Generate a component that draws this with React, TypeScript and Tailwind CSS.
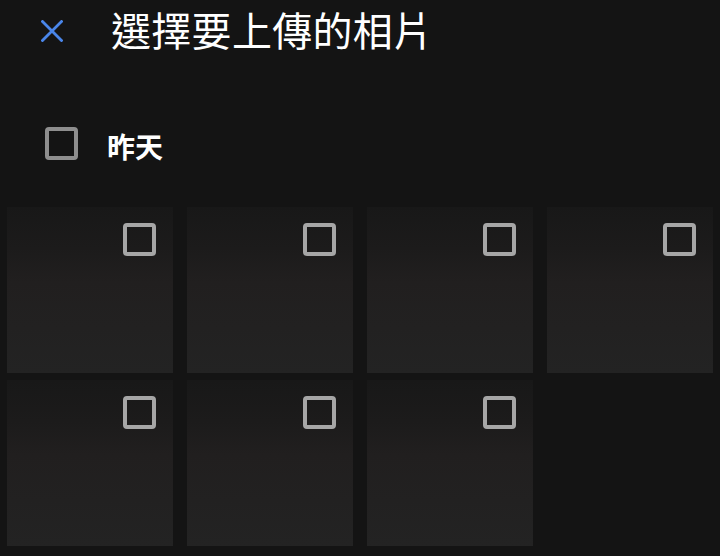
import React from "react";

const Box = ({ cls }: { cls: string }) => (
  <div className={`w-[33px] h-[33px] rounded-[4px] border-[4px] ${cls}`} />
);

const Tile = () => (
  <div className="relative h-[166px] bg-[linear-gradient(to_bottom,#181818_0%,#1c1b1b_25%,#211f1f_45%,#232323_100%)]">
    <div className="absolute top-[16px] right-[17px]">
      <Box cls="border-[#a6a6a6]" />
    </div>
  </div>
);

export default function App() {
  return (
    <div
      className="w-[720px] h-[556px] bg-[#141414] overflow-hidden text-white"
      style={{ fontFamily: '"Noto Sans CJK TC", "Noto Sans", sans-serif' }}
    >
      <div className="flex items-center h-[58px]">
        <svg className="ml-[41px] mt-[3px] w-[22px] h-[22px] shrink-0" viewBox="0 0 22 22">
          <path d="M1.5 1.5 L20.5 20.5 M20.5 1.5 L1.5 20.5" stroke="#4a86ea" strokeWidth="2.8" strokeLinecap="square" fill="none" />
        </svg>
        <div className="ml-[48px] text-[40px] leading-[58px] whitespace-nowrap tracking-[0.3px]">選擇要上傳的相片</div>
      </div>
      <div className="flex items-center mt-[69px] h-[33px]">
        <div className="ml-[45px]">
          <Box cls="border-[#8e8e8e]" />
        </div>
        <div className="ml-[29px] mt-[6px] text-[28px] font-bold leading-[33px]">昨天</div>
      </div>
      <div className="mt-[47px] px-[7px] grid grid-cols-4 gap-x-[14px] gap-y-[7px]">
        {Array.from({ length: 7 }).map((_, i) => (
          <Tile key={i} />
        ))}
      </div>
    </div>
  );
}
